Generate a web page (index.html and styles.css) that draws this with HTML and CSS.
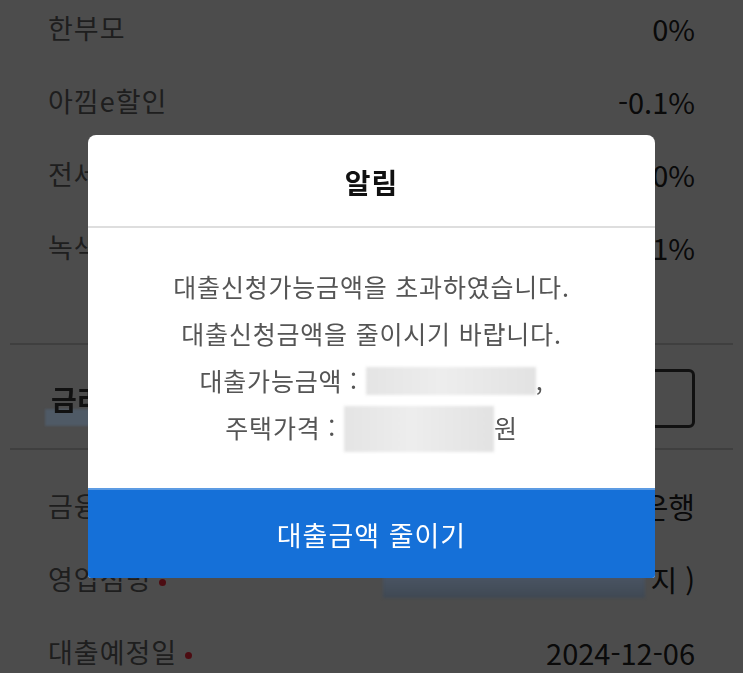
FILE: index.html
```html
<!DOCTYPE html>
<html lang="ko">

<head>
  <meta charset="UTF-8" />
  <meta name="viewport" content="width=device-width, initial-scale=1.0" />
  <title>대출 신청</title>
  <link rel="stylesheet" href="styles.css">
</head>

<body>
  <div class="page">
    <ul class="rate-list">
      <li class="row"><span class="label">한부모</span><span class="value">0%</span></li>
      <li class="row"><span class="label">아낌e할인</span><span class="value">-0.1%</span></li>
      <li class="row"><span class="label">전세사기피해자</span><span class="value">0%</span></li>
      <li class="row"><span class="label">녹색건축물</span><span class="value">-0.1%</span></li>
    </ul>
    <div class="section-gap"></div>
    <div class="section-head">
      <h3 class="head-title">금리우대</h3>
      <div class="select-box"></div>
    </div>
    <ul class="info-list">
      <li class="row"><span class="label">금융기관</span><span class="value">우리은행</span></li>
      <li class="row">
        <span class="label req">영업점명</span>
        <span class="value branch"><i class="blur-branch"></i>지 )</span>
      </li>
      <li class="row"><span class="label req">대출예정일</span><span class="value">2024-12-06</span></li>
    </ul>
  </div>

  <!-- 알림 팝업 -->
  <div class="dim"></div>
  <div class="modal-wrap">
    <div class="modal">
      <h2 class="modal-title">알림</h2>
      <div class="modal-body">
        <p>대출신청가능금액을 초과하였습니다.</p>
        <p>대출신청금액을 줄이시기 바랍니다.</p>
        <p>대출가능금액 : <i class="blur blur-amount"></i>,</p>
        <p>주택가격 : <i class="blur blur-price"></i>원</p>
      </div>
      <button class="modal-btn">대출금액 줄이기</button>
    </div>
  </div>
</body>

</html>
```

FILE: styles.css
```css
* {
  box-sizing: border-box;
}

body {
  margin: 0;
  background: #fff;
  color: #333;
  font-family: "Noto Sans CJK KR", "Noto Sans", sans-serif;
  overflow: hidden;
}

ul {
  margin: 0;
  padding: 0;
  list-style: none;
}

.page {
  margin-top: -9px;
}

.row {
  display: flex;
  justify-content: space-between;
  align-items: center;
  height: 73px;
  padding: 0 48px;
  white-space: nowrap;
}

.label {
  font-size: 27px;
  letter-spacing: 1px;
  color: #666;
}

.value {
  font-size: 29px;
  color: #222;
}

.req::after {
  content: "";
  display: inline-block;
  width: 7px;
  height: 7px;
  margin-left: 8px;
  border-radius: 50%;
  background: #ff2a3c;
  vertical-align: middle;
}

.section-gap {
  height: 62px;
  margin: 0 10px;
  border-bottom: 2px solid #d4d4d4;
}

.section-head {
  display: flex;
  justify-content: space-between;
  align-items: center;
  height: 105px;
  margin: 0 10px;
  padding: 0 38px;
  border-bottom: 2px solid #d4d4d4;
}

.head-title {
  position: relative;
  z-index: 15;
  margin: 4px 0 0 3px;
  font-size: 28px;
  font-weight: bold;
  color: #111;
}

/* 가림 처리된 부분 */
.head-title::after {
  content: "";
  position: absolute;
  left: -6px;
  right: -10px;
  top: 30px;
  height: 17px;
  z-index: -1;
  background: #4f5a66;
  filter: blur(1px);
}

.select-box {
  width: 155px;
  height: 59px;
  margin-top: 3px;
  border: 3px solid #3a3a3a;
  border-radius: 6px;
}

.info-list {
  padding-top: 19px;
}

.branch {
  display: flex;
  align-items: center;
}

.blur-branch {
  position: relative;
  z-index: 15;
  width: 262px;
  height: 23px;
  margin: 16px 5px 0 0;
  background: linear-gradient(#4a5564, #3f4853);
  filter: blur(1.5px);
}

.dim {
  position: fixed;
  inset: 0;
  z-index: 10;
  background: rgba(0, 0, 0, 0.7);
}

.modal-wrap {
  position: fixed;
  inset: 0;
  z-index: 20;
  display: flex;
  justify-content: center;
  align-items: flex-start;
  padding-top: 135px;
}

.modal {
  width: 567px;
  background: #fff;
  border-radius: 8px 8px 3px 3px;
  overflow: hidden;
}

.modal-title {
  display: flex;
  justify-content: center;
  align-items: center;
  height: 93px;
  margin: 0;
  padding-top: 3px;
  border-bottom: 2px solid #dedede;
  font-size: 28px;
  font-weight: bold;
  letter-spacing: 1px;
  color: #111;
}

.modal-body {
  padding: 35px 0 36px;
  text-align: center;
  font-size: 25px;
  letter-spacing: 0.8px;
  line-height: 47px;
  color: #555;
}

.modal-body p {
  margin: 0;
  white-space: nowrap;
}

.blur {
  display: inline-block;
  vertical-align: middle;
  background: linear-gradient(90deg, #e4e4e4, #ededed 45%, #e2e2e2);
  filter: blur(1.5px);
}

.blur-amount {
  width: 170px;
  height: 28px;
  margin-top: -6px;
}

.blur-price {
  width: 150px;
  height: 46px;
  margin-top: -4px;
}

.modal-btn {
  display: block;
  width: 100%;
  height: 90px;
  border: none;
  border-top: 2px solid #5c9be3;
  background: #1570d8;
  color: #fff;
  font-family: inherit;
  font-size: 27px;
  letter-spacing: 1px;
  cursor: pointer;
}
```
